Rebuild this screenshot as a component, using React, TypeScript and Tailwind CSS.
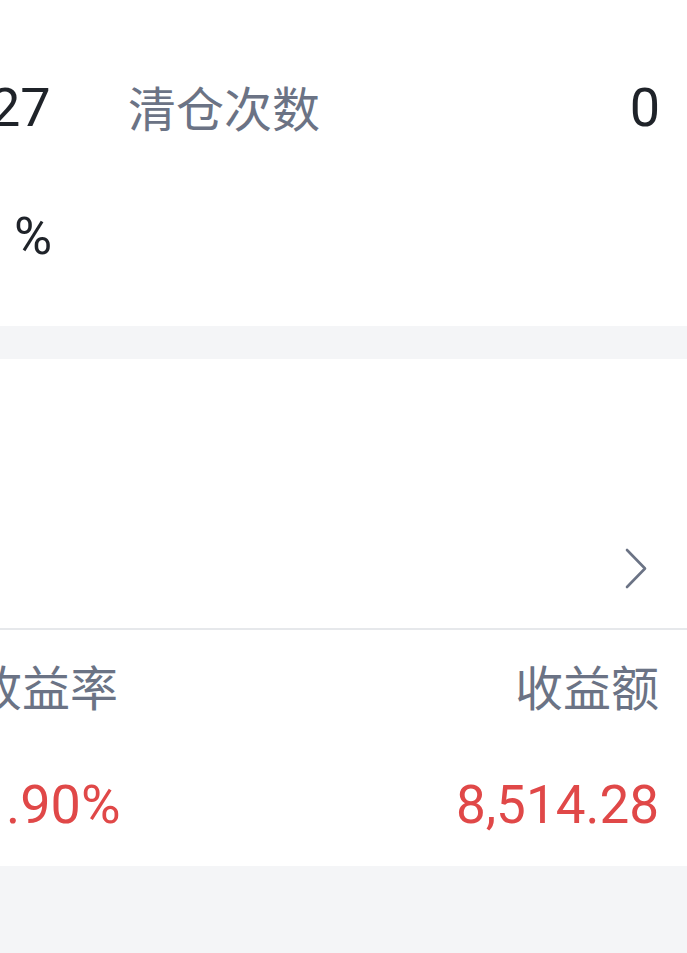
import React from "react";

export default function App() {
  const num = "font-['Roboto','Noto_Sans_CJK_SC',sans-serif]";
  const cjk = "font-['Noto_Sans_CJK_SC','Roboto',sans-serif]";
  return (
    <div className="w-[687px] h-[953px] bg-[#f4f5f7] overflow-hidden">
      <section className="bg-white h-[326px] flex flex-col">
        <div className="mt-[78px] h-[60px] flex items-center">
          <div className={`ml-[-10px] w-[138px] text-[54px] leading-none text-[#1f2329] ${num}`}>27</div>
          <div className={`flex-1 -mt-[4px] text-[48px] leading-none text-[#6b7385] ${cjk}`}>清仓次数</div>
          <div className={`pr-[27px] text-[54px] leading-none text-[#1f2329] ${num}`}>0</div>
        </div>
        <div className="mt-[69px] h-[60px] flex items-center">
          <div className={`ml-[14px] text-[52px] leading-none text-[#1f2329] ${num}`}>%</div>
        </div>
      </section>
      <div className="h-[33px]" />
      <section className="bg-white h-[507px] flex flex-col">
        <div className="h-[269px] flex items-end justify-end pr-[39px] pb-[38px]">
          <svg width="24" height="43" viewBox="0 0 24 43" fill="none">
            <path d="M3 3 L21 21.5 L3 40" stroke="#6b7385" strokeWidth="2.6" strokeLinecap="round" strokeLinejoin="round" />
          </svg>
        </div>
        <div className="h-[2px] bg-[#e6e8eb]" />
        <div className="mt-[25px] h-[60px] flex items-center justify-between">
          <div className={`ml-[-26px] text-[48px] leading-none text-[#6b7385] ${cjk}`}>收益率</div>
          <div className={`pr-[28px] text-[48px] leading-none text-[#6b7385] ${cjk}`}>收益额</div>
        </div>
        <div className="mt-[60px] h-[60px] flex items-center justify-between">
          <div className={`ml-[6px] text-[54px] leading-none text-[#e04848] ${num}`}>.90%</div>
          <div className={`pr-[28px] text-[53px] leading-none text-[#e04848] ${num}`}>8,514.28</div>
        </div>
      </section>
    </div>
  );
}
